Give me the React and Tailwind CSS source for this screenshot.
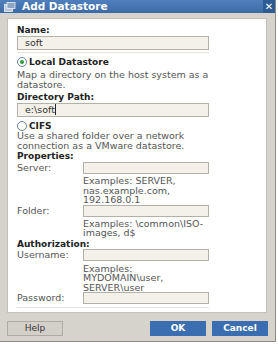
import React from 'react';

const Input = ({ w = 'w-[192px]', h = 'h-[14px]', children }) => (
  <div className={`${w} ${h} bg-[#f4f1ea] border border-[#b3b0a8] pl-[7px] text-[#333] text-[9.5px] leading-[12px]`}>{children}</div>
);

const Field = ({ label, hint, top, hintTop = 'mt-[2px]' }) => (
  <div className={`flex ${top}`}>
    <div className="w-[66px] h-[12px] leading-[12px] text-[#555]">{label}</div>
    <div className="flex flex-col">
      <Input w="w-[126px]" h="h-[12px]" />
      {hint && <div className={`${hintTop} leading-[9.5px] text-[#555]`}>{hint}</div>}
    </div>
  </div>
);

const Radio = ({ checked, label }) => (
  <div className="flex items-center h-[10px] gap-[2px]">
    <span className="w-[10px] h-[10px] rounded-full border border-[#6b87a2] bg-white flex items-center justify-center">
      {checked && <span className="w-[4px] h-[4px] rounded-full bg-[#2e9e3a]" />}
    </span>
    <span className="font-bold text-[#222] text-[9px] leading-[10px]">{label}</span>
  </div>
);

export default function App() {
  return (
    <div className="w-[278px] h-[344px] bg-white overflow-hidden" style={{ fontFamily: '"DejaVu Sans", Verdana, sans-serif' }}>
      <div className="w-[276px] h-[342px] bg-[#d6d3cc] border-r border-b border-[#8c8a85] flex flex-col text-[9.5px]">
        <div className="h-[13px] bg-gradient-to-b from-[#4f7fbc] to-[#3d6ba7] flex items-center pl-[4px]">
          <svg width="12" height="10" viewBox="0 0 12 10" className="mr-[6px]">
            <rect x="0.5" y="2.5" width="8" height="7" fill="#b9c9dd" stroke="#eef2f8" strokeWidth="0.8" />
            <rect x="3" y="0.5" width="8" height="6" fill="#8ea6c4" stroke="#eef2f8" strokeWidth="0.8" />
          </svg>
          <span className="text-white font-bold text-[10.5px] leading-[13px]">Add Datastore</span>
          <div className="ml-auto w-[12px] h-[13px] bg-[#2f5b94] flex items-center justify-center text-white font-bold text-[10px] leading-none">✕</div>
        </div>
        <div className="ml-[7px] mr-[8px] mt-[5px] h-[295px] bg-white border border-[#c3c0b9] pl-[9px] pt-[6px] flex flex-col">
          <div className="h-[10px] font-bold text-[#222] text-[9px] leading-[10px]">Name:</div>
          <div className="mt-[1px]"><Input>soft</Input></div>
          <div className="mt-[2px] w-[192px] border-t border-[#e6e4df]" />
          <div className="mt-[4px]"><Radio checked label="Local Datastore" /></div>
          <div className="mt-[3px] leading-[10px] text-[#555]">Map a directory on the host system as a<br />datastore.</div>
          <div className="mt-[2px] h-[10px] font-bold text-[#222] text-[9px] leading-[10px]">Directory Path:</div>
          <div className="mt-[1px]"><Input>e:\soft<span className="border-l border-[#222] ml-[0.5px]" /></Input></div>
          <div className="mt-[4px]"><Radio label="CIFS" /></div>
          <div className="mt-[0px] leading-[9.5px] text-[#555]">Use a shared folder over a network<br />connection as a VMware datastore.</div>
          <div className="mt-[1px] h-[10px] font-bold text-[#222] text-[9px] leading-[10px]">Properties:</div>
          <Field label="Server:" top="mt-[1px]" hint={<>Examples: SERVER,<br />nas.example.com,<br />192.168.0.1</>} />
          <Field label="Folder:" top="mt-[0px]" hint={<>Examples: \common\ISO-<br />images, d$</>} />
          <div className="mt-[1px] h-[10px] font-bold text-[#222] text-[9px] leading-[10px]">Authorization:</div>
          <Field label="Username:" top="mt-[0px]" hintTop="mt-[3px]" hint={<>Examples:<br />MYDOMAIN\user,<br />SERVER\user</>} />
          <Field label="Password:" top="mt-[0px]" />
          <div className="mt-[3px] w-[192px] border-t border-[#e6e4df]" />
        </div>
        <div className="flex mt-[8px] ml-[7px] mr-[7px]">
          <button className="w-[56px] h-[15px] bg-[#d3d0c9] border border-[#aeaba4] text-[#333] text-[9px] leading-none">Help</button>
          <button className="ml-auto w-[56px] h-[15px] bg-[#3a6eb0] text-white font-bold text-[9px] leading-none">OK</button>
          <button className="ml-[6px] w-[56px] h-[15px] bg-[#3a6eb0] text-white font-bold text-[9px] leading-none">Cancel</button>
        </div>
      </div>
    </div>
  );
}
